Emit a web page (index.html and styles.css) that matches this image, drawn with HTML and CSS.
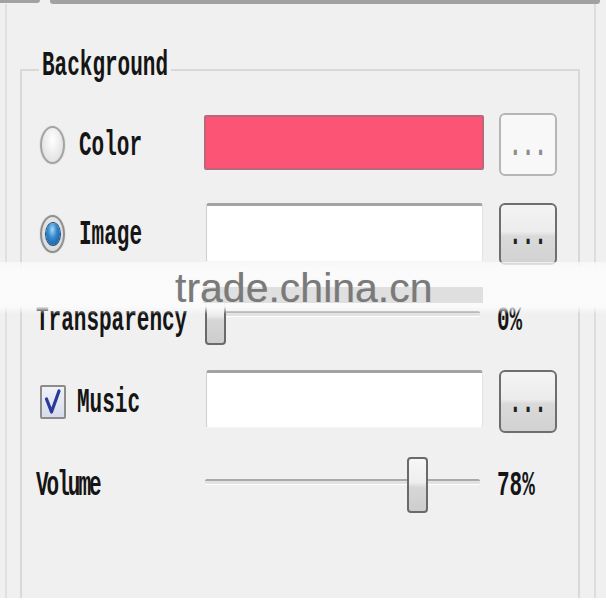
FILE: index.html
```html
<!DOCTYPE html>
<html lang="en">
<head>
<meta charset="utf-8">
<title>Background settings</title>
<link rel="stylesheet" href="styles.css">
</head>
<body>
<div class="page">
  <div class="tabs"><span class="tab-edge"></span><span class="tab-line"></span></div>
  <div class="panel">
    <fieldset class="group">
      <legend class="group-title"><span class="t">Background</span></legend>

      <div class="row row-color">
        <label class="choice"><span class="radio"></span><span class="t">Color</span></label>
        <div class="field field-color"></div>
        <button class="browse browse-off" type="button"><span class="t">...</span></button>
      </div>

      <div class="row row-image">
        <label class="choice"><span class="radio radio-on"></span><span class="t">Image</span></label>
        <div class="field field-image"></div>
        <button class="browse" type="button"><span class="t">...</span></button>
      </div>

      <div class="row row-trans">
        <span class="t caption">Transparency</span>
        <div class="slider" style="--v:0"><span class="track"></span><span class="thumb"></span></div>
        <span class="t value">0%</span>
      </div>

      <div class="row row-music">
        <label class="choice choice-check">
          <span class="check">
            <svg viewBox="0 0 22 30" width="22" height="30"><path d="M4.5 12 L9.5 25 L17 4" fill="none" stroke="#2b3a98" stroke-width="3.2" stroke-linejoin="round" stroke-linecap="round"/></svg>
          </span>
          <span class="t">Music</span>
        </label>
        <div class="field field-music"></div>
        <button class="browse" type="button"><span class="t">...</span></button>
      </div>

      <div class="row row-volume">
        <span class="t caption narrow">Volume</span>
        <div class="slider" style="--v:78"><span class="track"></span><span class="thumb"></span></div>
        <span class="t value">78%</span>
      </div>
    </fieldset>
  </div>
  <div class="watermark"><span class="wm-text">trade.china.cn</span></div>
</div>
</body>
</html>
```

FILE: styles.css
```css
* { box-sizing: border-box; }

html, body { margin: 0; }

body {
  width: 606px;
  height: 602px;
  overflow: hidden;
  background: #ffffff;
}

.page {
  position: relative;
  height: 598px;
  background: #f0f0f0;
  display: flex;
  flex-direction: column;
}

/* tab strip edge along the top */
.tabs {
  display: flex;
  height: 4px;
}
.tab-edge {
  width: 40px;
  height: 3px;
  background: #a2a2a2;
  border-radius: 0 0 3px 0;
}
.tab-line {
  flex: 1;
  height: 4px;
  margin: 0 6px 0 10px;
  background: #a2a2a2;
  border-radius: 0 0 3px 3px;
}

.panel {
  flex: 1;
  display: flex;
  flex-direction: column;
  margin: 0 10px 0 5px;
  padding: 0 14px 0 13px;
  border-left: 2px solid #e0e0e0;
  border-right: 2px solid #dddddd;
}

/* group box */
.group {
  flex: 1;
  min-width: 0;
  margin: 47px 0 0;
  padding: 24px 0 0 14px;
  border: 2px solid #d9d9d9;
  border-bottom: 0;
}
.group-title {
  margin-left: 3px;
  padding: 0 3px 14px;
  line-height: 24px;
}
.group-title .t {
  transform: translateY(4px) scaleY(1.65);
}

/* stretched dialog text */
.t {
  display: inline-block;
  font: bold 21px/24px "Liberation Mono", "DejaVu Sans Mono", monospace;
  color: #151515;
  transform: translateY(2px) scaleY(1.65);
  white-space: nowrap;
}
.narrow { letter-spacing: -2px; }

.row {
  display: grid;
  grid-template-columns: 168px 280px 15px 58px;
  align-items: center;
}
.row-color  { height: 63px; }
.row-image  { height: 62px; margin-top: 27px; }
.row-trans  { height: 55px; margin-top: 25px; }
.row-music  { height: 63px; margin-top: 25px; }
.row-volume { height: 56px; margin-top: 24px; }

.row-trans .t { transform: translateY(4px) scaleY(1.65); }

.choice {
  display: flex;
  align-items: center;
  gap: 14px;
  padding-left: 4px;
}
.choice-check { gap: 11px; }

.radio {
  width: 25px;
  height: 38px;
  border-radius: 50%;
  border: 2px solid #a4a4a4;
  box-shadow: 0 0 0 1px #e6e6e6;
  background: radial-gradient(ellipse at 50% 35%, #ffffff 0, #e6e6e6 65%, #cfcfcf 100%);
  display: flex;
  align-items: center;
  justify-content: center;
}
.radio-on {
  border-color: #8f8f8f;
  background: radial-gradient(ellipse at 50% 40%, #eeeeee 0, #d4d4d4 100%);
}
.radio-on::after {
  content: "";
  width: 14px;
  height: 22px;
  border-radius: 50%;
  background: radial-gradient(ellipse at 45% 30%, #a9d8f7 0, #3389cd 40%, #0c4c8c 100%);
  box-shadow: 0 0 0 1px #1d4f80;
}

.check {
  width: 26px;
  height: 34px;
  border: 2px solid #8c8c8c;
  border-radius: 2px;
  background: linear-gradient(#f0f2f8, #d6dcec);
  display: flex;
  align-items: center;
  justify-content: center;
}

.field {
  align-self: start;
  background: #ffffff;
  border-top: 3px solid #a3a3a3;
  border-left: 1px solid #cfcfcf;
  border-right: 1px solid #e3e3e3;
  border-bottom: 1px solid #f7f7f7;
  border-radius: 3px;
}
.field-color {
  height: 55px;
  margin-top: 2px;
  background: #fb5475;
  border: 2px solid #b9687b;
  border-radius: 2px;
}
.field-image { height: 59px; margin: 0 1px 0 2px; }
.field-music { height: 58px; margin: 0 1px 0 2px; }

.browse {
  grid-column: 4;
  align-self: stretch;
  margin: 0;
  padding: 0;
  border: 2px solid #6e6e6e;
  border-radius: 6px;
  background: linear-gradient(#f4f4f4 0, #ececec 46%, #dadada 54%, #d2d2d2 100%);
  display: flex;
  align-items: center;
  justify-content: center;
}
.browse .t { color: #222222; }
.browse-off {
  border-color: #b6b6b6;
  background: #f8f8f8;
}
.browse-off .t { color: #8c8c8c; }

/* trackbar */
.slider {
  position: relative;
  align-self: stretch;
  display: flex;
  align-items: center;
  padding: 0 4px 0 1px;
}
.track {
  flex: 1;
  height: 6px;
  margin-bottom: 7px;
  background: #e2e2e2;
  border-top: 2px solid #a9a9a9;
  border-bottom: 1px solid #ffffff;
  border-radius: 2px;
}
.thumb {
  position: absolute;
  top: 0;
  bottom: 0;
  left: calc(1px + (100% - 21px) * var(--v) / 100);
  width: 21px;
  border: 2px solid #6a6a6a;
  border-radius: 4px;
  background: linear-gradient(#f7f7f7 0, #eeeeee 45%, #d7d7d7 55%, #cdcdcd 100%);
}

.value {
  grid-column: 3 / span 2;
  justify-self: start;
  margin-left: 13px;
}

/* watermark strip across the panel */
.watermark {
  position: absolute;
  left: 0;
  right: 0;
  top: 262px;
  height: 52px;
  padding: 3px 0 0 175px;
  background: linear-gradient(to bottom,
    rgba(251, 251, 251, 0.7) 0,
    rgba(251, 251, 251, 0.96) 12%,
    rgba(251, 251, 251, 0.96) 86%,
    rgba(251, 251, 251, 0) 100%);
  font: 41px/46px "Liberation Sans", Arial, sans-serif;
  color: #7a7a7a;
  pointer-events: none;
}
.watermark::before {
  content: "";
  position: absolute;
  left: 203px;
  top: 25px;
  width: 280px;
  height: 16px;
  background: rgba(190, 190, 190, 0.45);
}
.wm-text {
  position: relative;
  text-shadow: 0 0 1px rgba(0, 0, 0, 0.2);
}
```
